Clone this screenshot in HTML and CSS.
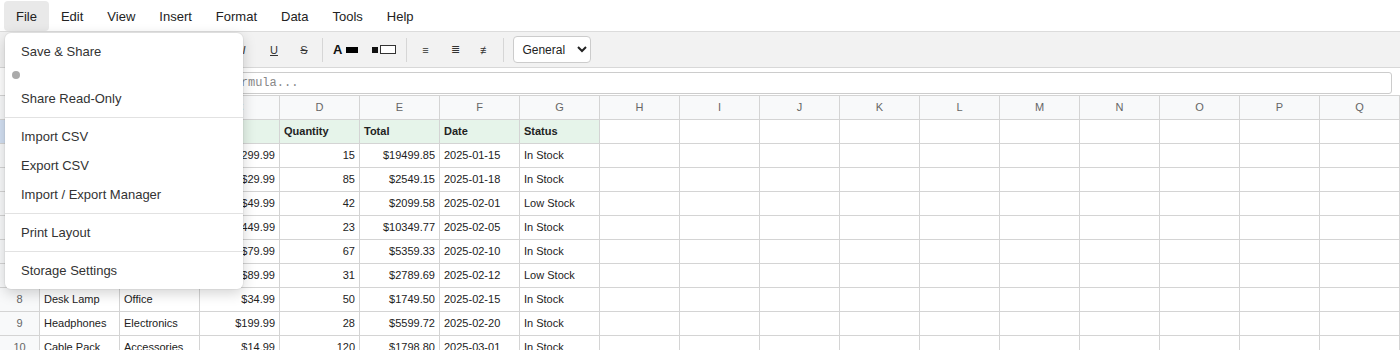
FILE: index.html
```html
<!DOCTYPE html>
<html>
    <head>
        <title>Sheet</title>
        <link rel="stylesheet" href="styles.css">
        <script>

            const COLS = "ABCDEFGHIJKLMNOPQ".split("")

            // Sample inventory rows: product, category, price, quantity, date, status
            const ROWS = [
                ["Laptop Pro", "Electronics", 1299.99, 15, "2025-01-15", "In Stock"],
                ["Wireless Mouse", "Accessories", 29.99, 85, "2025-01-18", "In Stock"],
                ["Keyboard", "Accessories", 49.99, 42, "2025-02-01", "Low Stock"],
                ["Monitor 27\"", "Electronics", 449.99, 23, "2025-02-05", "In Stock"],
                ["Webcam HD", "Electronics", 79.99, 67, "2025-02-10", "In Stock"],
                ["Office Chair", "Office", 89.99, 31, "2025-02-12", "Low Stock"],
                ["Desk Lamp", "Office", 34.99, 50, "2025-02-15", "In Stock"],
                ["Headphones", "Electronics", 199.99, 28, "2025-02-20", "In Stock"],
                ["Cable Pack", "Accessories", 14.99, 120, "2025-03-01", "In Stock"]
            ]

            const cell = (text, cls) => {
                const el = document.createElement("div")
                el.className = "cell" + (cls ? " " + cls : "")
                el.textContent = text
                return el
            }

            const init = () => {
                const grid = document.querySelector(".grid")

                // Column letters
                grid.appendChild(cell("", "corner"))
                COLS.forEach(c => grid.appendChild(cell(c, "col-head" + (c === "A" ? " active" : ""))))

                // Row 1 holds the headings
                const heads = ["Product", "Category", "Price", "Quantity", "Total", "Date", "Status"]
                grid.appendChild(cell("1", "row-head active"))
                COLS.forEach((c, i) => grid.appendChild(cell(heads[i] || "", heads[i] ? "head" : "")))

                ROWS.forEach((r, n) => {
                    const values = [
                        [r[0]], [r[1]],
                        ["$" + r[2].toFixed(2), "num"],
                        [r[3], "num"],
                        ["$" + (r[2] * r[3]).toFixed(2), "num"],
                        [r[4]], [r[5]]
                    ]
                    grid.appendChild(cell(n + 2, "row-head"))
                    COLS.forEach((c, i) => {
                        const v = values[i] || [""]
                        grid.appendChild(cell(v[0], v[1]))
                    })
                })
            }

            document.addEventListener("DOMContentLoaded", init)
        </script>
    </head>
    <body>
        <nav class="menubar">
            <button class="open">File</button>
            <button>Edit</button>
            <button>View</button>
            <button>Insert</button>
            <button>Format</button>
            <button>Data</button>
            <button>Tools</button>
            <button>Help</button>
        </nav>
        <div class="toolbar">
            <button>↶</button>
            <button>↷</button>
            <span class="sep"></span>
            <button>✂</button>
            <button>⧉</button>
            <button>⎘</button>
            <button>⌫</button>
            <span class="sep"></span>
            <button><b>B</b></button>
            <button><i>I</i></button>
            <button><u>U</u></button>
            <button><s>S</s></button>
            <span class="sep"></span>
            <button class="wide"><b class="big">A</b><span class="swatch"></span></button>
            <button class="wide"><span class="dot"></span><span class="box"></span></button>
            <span class="sep"></span>
            <button>≡</button>
            <button>≣</button>
            <button>≢</button>
            <span class="sep"></span>
            <select>
                <option>General</option>
                <option>Number</option>
                <option>Currency</option>
                <option>Date</option>
            </select>
        </div>
        <div class="formula">
            <span class="ref">A1</span>
            <span class="fx">fx</span>
            <input placeholder="Enter value or formula...">
        </div>
        <div class="grid"></div>

        <div class="dropdown">
            <div class="item">Save &amp; Share</div>
            <div class="status"><span></span></div>
            <div class="item">Share Read-Only</div>
            <hr>
            <div class="item">Import CSV</div>
            <div class="item">Export CSV</div>
            <div class="item">Import / Export Manager</div>
            <hr>
            <div class="item">Print Layout</div>
            <hr>
            <div class="item">Storage Settings</div>
        </div>
    </body>
</html>
```

FILE: styles.css
```css
html, body {
    margin: 0;
    overflow: hidden;
    background: #fff;
    font-family: "Liberation Sans", Arial, sans-serif;
    color: #222;
}

.menubar {
    display: flex;
    align-items: flex-end;
    height: 31px;
    padding: 0 4px;
    border-bottom: 1px solid #dcdcdc;
}

    .menubar button {
        height: 30px;
        padding: 0 12px;
        border: 0;
        border-radius: 4px;
        background: none;
        font: 13px "Liberation Sans", Arial, sans-serif;
        color: #222;
    }

    .menubar button.open {
        background: #e9e9e9;
    }

.toolbar {
    display: flex;
    align-items: center;
    height: 35px;
    padding: 0 8px 0 5px;
    background: #f2f2f2;
    border-bottom: 1px solid #d8d8d8;
}

    .toolbar button {
        height: 26px;
        min-width: 28px;
        margin: 0 1px;
        padding: 0 6px;
        border: 0;
        background: none;
        font: 11px "Liberation Sans", Arial, sans-serif;
        color: #333;
        display: flex;
        align-items: center;
        justify-content: center;
    }

    .toolbar .sep {
        width: 1px;
        height: 24px;
        margin: 0 3px;
        background: #d6d6d6;
    }

    .toolbar .big {
        font-size: 13px;
        color: #111;
    }

    .toolbar .swatch {
        width: 12px;
        height: 6px;
        margin-left: 4px;
        background: #000;
    }

    .toolbar .dot {
        width: 6px;
        height: 6px;
        background: #111;
    }

    .toolbar .box {
        box-sizing: border-box;
        width: 16px;
        height: 9px;
        margin-left: 2px;
        border: 1px solid #333;
        background: #fff;
    }

    .toolbar select {
        height: 27px;
        width: 78px;
        margin-left: 6px;
        padding: 0 4px;
        border: 1px solid #ccc;
        border-radius: 4px;
        background: #fff;
        font: 12px "Liberation Sans", Arial, sans-serif;
        color: #222;
    }

.formula {
    display: flex;
    align-items: flex-start;
    height: 28px;
    padding: 4px 8px 0;
    box-sizing: border-box;
    border-bottom: 1px solid #d4d4d4;
    gap: 8px;
}

    .formula .ref, .formula .fx {
        font-size: 12px;
        line-height: 22px;
        color: #555;
    }

    .formula .ref {
        width: 78px;
    }

    .formula input {
        flex: 1;
        height: 22px;
        box-sizing: border-box;
        border: 1px solid #ccc;
        border-radius: 3px;
        padding: 0 6px;
        font: 12px "Liberation Mono", monospace;
    }

    .formula input::placeholder {
        color: #888;
    }

.grid {
    display: grid;
    grid-template-columns: 40px repeat(17, 80px);
    grid-auto-rows: 24px;
}

    .cell {
        box-sizing: border-box;
        padding: 0 4px;
        border-right: 1px solid #d4d4d4;
        border-bottom: 1px solid #d4d4d4;
        font-size: 11px;
        line-height: 23px;
        white-space: nowrap;
        overflow: hidden;
        color: #222;
    }

    .cell.corner, .cell.col-head, .cell.row-head {
        background: #f8f9fa;
        color: #666;
        text-align: center;
    }

    .cell.active {
        background: #d3e0f3;
    }

    .cell.head {
        background: #e6f4ea;
        font-weight: bold;
    }

    .cell.num {
        text-align: right;
    }

.dropdown {
    position: absolute;
    top: 33px;
    left: 5px;
    width: 238px;
    box-sizing: border-box;
    padding: 4px 0;
    background: #fff;
    border-radius: 6px;
    box-shadow: 0 4px 14px rgba(0, 0, 0, .18), 0 0 0 1px rgba(0, 0, 0, .04);
}

    .dropdown .item {
        height: 29px;
        padding: 0 16px;
        font-size: 13px;
        line-height: 29px;
        color: #333;
    }

    .dropdown .status {
        height: 18px;
        display: flex;
        align-items: center;
        padding-left: 7px;
    }

        .dropdown .status span {
            width: 8px;
            height: 8px;
            border-radius: 50%;
            background: #aaa;
        }

    .dropdown hr {
        margin: 4px 0;
        border: 0;
        border-top: 1px solid #e2e2e2;
    }
```
